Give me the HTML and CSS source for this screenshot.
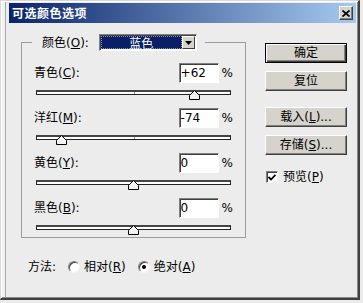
FILE: index.html
```html
<!DOCTYPE html>
<html>
<head>
  <title>可选颜色选项</title>
  <link rel="stylesheet" href="styles.css">
</head>
<body>

<div class="window">
  <div class="titlebar">
    <span class="title">可选颜色选项</span>
    <button class="close-btn" type="button">
      <svg width="8" height="7" viewBox="0 0 8 7"><path d="M0.5 0.5 L7.5 6.5 M7.5 0.5 L0.5 6.5" stroke="#000" stroke-width="1.7"/></svg>
    </button>
  </div>

  <div class="dialog">
    <div class="main">
      <fieldset class="group">
        <legend class="group-head">
          <span>颜色(<u>O</u>):</span>
          <div class="combo">
            <span class="combo-value">蓝色</span>
            <span class="combo-arrow">
              <svg width="7" height="4" viewBox="0 0 7 4"><polygon points="0,0 7,0 3.5,4" fill="#000"/></svg>
            </span>
          </div>
        </legend>

        <div class="adjust">
          <div class="field-row">
            <span class="row-label">青色(<u>C</u>):</span>
            <input class="value" type="text" value="+62">
            <span class="unit">%</span>
          </div>
          <div class="slider">
            <div class="track mid-tick"></div>
            <svg class="thumb" style="left: 153px" width="11" height="10" viewBox="0 0 11 10"><polygon points="5.5,0.5 10.5,5.5 10.5,9.5 0.5,9.5 0.5,5.5" fill="#f4f4f4" stroke="#000"/></svg>
          </div>
        </div>

        <div class="adjust">
          <div class="field-row">
            <span class="row-label">洋红(<u>M</u>):</span>
            <input class="value" type="text" value="-74">
            <span class="unit">%</span>
          </div>
          <div class="slider">
            <div class="track mid-tick"></div>
            <svg class="thumb" style="left: 20px" width="11" height="10" viewBox="0 0 11 10"><polygon points="5.5,0.5 10.5,5.5 10.5,9.5 0.5,9.5 0.5,5.5" fill="#f4f4f4" stroke="#000"/></svg>
          </div>
        </div>

        <div class="adjust">
          <div class="field-row">
            <span class="row-label">黄色(<u>Y</u>):</span>
            <input class="value" type="text" value="0">
            <span class="unit">%</span>
          </div>
          <div class="slider">
            <div class="track"></div>
            <svg class="thumb" style="left: 92px" width="11" height="10" viewBox="0 0 11 10"><polygon points="5.5,0.5 10.5,5.5 10.5,9.5 0.5,9.5 0.5,5.5" fill="#f4f4f4" stroke="#000"/></svg>
          </div>
        </div>

        <div class="adjust">
          <div class="field-row">
            <span class="row-label">黑色(<u>B</u>):</span>
            <input class="value" type="text" value="0">
            <span class="unit">%</span>
          </div>
          <div class="slider">
            <div class="track"></div>
            <svg class="thumb" style="left: 92px" width="11" height="10" viewBox="0 0 11 10"><polygon points="5.5,0.5 10.5,5.5 10.5,9.5 0.5,9.5 0.5,5.5" fill="#f4f4f4" stroke="#000"/></svg>
          </div>
        </div>
      </fieldset>

      <div class="method">
        <span class="method-label">方法:</span>
        <label class="radio-option"><span class="radio"></span>相对(<u>R</u>)</label>
        <label class="radio-option"><span class="radio checked"></span>绝对(<u>A</u>)</label>
      </div>
    </div>

    <div class="side">
      <button class="btn default" type="button">确定</button>
      <button class="btn" type="button">复位</button>
      <button class="btn gap-top" type="button">载入(<u>L</u>)...</button>
      <button class="btn" type="button">存储(<u>S</u>)...</button>
      <label class="preview">
        <span class="check">
          <svg width="8" height="7" viewBox="0 0 8 7"><polyline points="0.5,3 3,5.5 7.5,0.8" fill="none" stroke="#000" stroke-width="1.8"/></svg>
        </span>
        预览(<u>P</u>)
      </label>
    </div>
  </div>
</div>

</body>
</html>
```

FILE: styles.css
```css
body {
  margin: 0;
  background-color: #ebebeb;
  font-family: "DejaVu Sans", "Noto Sans CJK SC", sans-serif;
  font-size: 12px;
  line-height: 16px;
  color: #000;
}

.window {
  width: 360px;
  height: 300px;
  box-sizing: border-box;
  background-color: #ececec;
  border-style: solid;
  border-width: 1px 2px 2px 1px;
  border-color: #d8d8d8 #404040 #404040 #d8d8d8;
  box-shadow: inset 1px 1px 0 #fff, inset -1px -1px 0 #8a8a8a, inset 4px 0 0 #f2f2f2, inset 5px 0 0 #a8a8a8;
}

/* title bar */
.titlebar {
  display: flex;
  align-items: center;
  justify-content: space-between;
  height: 20px;
  margin: 2px 2px 0 8px;
  padding: 0 3px;
  background: linear-gradient(to right, #0a246a, #a6caf0);
}

.title {
  color: #fff;
  font-family: "Noto Sans CJK SC", sans-serif;
  font-weight: bold;
  letter-spacing: 0.5px;
}

.close-btn {
  display: flex;
  align-items: center;
  justify-content: center;
  width: 14px;
  height: 14px;
  padding: 0;
  background-color: #d6d3cc;
  border: 1px solid;
  border-color: #fff #404040 #404040 #fff;
  box-shadow: inset -1px -1px 0 #808080;
}

/* body */
.dialog {
  display: flex;
  align-items: flex-start;
  padding: 11px 0 0 20px;
}

.main {
  width: 225px;
}

.group {
  width: 225px;
  box-sizing: border-box;
  margin: 0;
  padding: 12px 12px 2px;
  border: 1px solid #9c9c9c;
}

.group-head {
  display: flex;
  align-items: center;
  margin-left: -2px;
  padding: 0 8px 0 10px;
}

.combo {
  display: flex;
  margin-left: 10px;
  padding: 1px;
  background-color: #fff;
  border: 1px solid;
  border-color: #808080 #fff #fff #808080;
  box-shadow: inset 1px 1px 0 #404040;
}

.combo-value {
  width: 81px;
  height: 13px;
  box-sizing: border-box;
  background-color: #0a1f66;
  outline: 1px dotted #8890b0;
  outline-offset: -1px;
  color: #fff;
  text-align: center;
  line-height: 13px;
  font-family: "Noto Sans CJK SC", sans-serif;
}

.combo-arrow {
  display: flex;
  align-items: center;
  justify-content: center;
  width: 13px;
  height: 13px;
  box-sizing: border-box;
  background-color: #d6d3cc;
  border: 1px solid;
  border-color: #fff #404040 #404040 #fff;
}

.adjust + .adjust {
  margin-top: 8px;
}

.field-row {
  display: flex;
  align-items: center;
  height: 20px;
}

.row-label {
  flex: 1;
}

.value {
  width: 40px;
  height: 20px;
  box-sizing: border-box;
  margin: 0;
  padding: 0 1px;
  background-color: #fff;
  border: 1px solid;
  border-color: #808080 #fff #fff #808080;
  box-shadow: inset 1px 1px 0 #404040;
  font: 12px "DejaVu Sans", sans-serif;
  color: #000;
}

.unit {
  margin-left: 3px;
}

.slider {
  position: relative;
  height: 10px;
  margin: 7px 2px 0;
}

.track {
  position: relative;
  height: 5px;
  margin-top: 3px;
  box-sizing: border-box;
  background-color: #fff;
  border: 1px solid #222;
  border-top: 2px solid #444;
}

.mid-tick::after {
  content: "";
  position: absolute;
  left: 97px;
  top: 0;
  width: 1px;
  height: 2px;
  background-color: #999;
}

.thumb {
  position: absolute;
  top: 0;
}

/* method row */
.method {
  display: flex;
  align-items: center;
  height: 16px;
  margin-top: 21px;
  padding-left: 7px;
}

.method-label {
  margin-right: 12px;
}

.radio-option {
  display: flex;
  align-items: center;
  margin-right: 12px;
}

.radio {
  position: relative;
  width: 12px;
  height: 12px;
  box-sizing: border-box;
  margin-right: 4px;
  border-radius: 50%;
  background-color: #fff;
  border: 1px solid;
  border-color: #808080 #f4f4f4 #f4f4f4 #808080;
  box-shadow: inset 1px 1px 0 #404040;
}

.radio.checked::after {
  content: "";
  position: absolute;
  left: 3px;
  top: 3px;
  width: 4px;
  height: 4px;
  border-radius: 50%;
  background-color: #000;
}

/* right column */
.side {
  display: flex;
  flex-direction: column;
  width: 82px;
  margin-left: 19px;
  padding-top: 9px;
}

.btn {
  width: 82px;
  height: 20px;
  box-sizing: border-box;
  margin: 0 0 8px;
  padding: 0;
  background-color: #d6d3cc;
  border: 1px solid;
  border-color: #fff #404040 #404040 #fff;
  box-shadow: inset -1px -1px 0 #808080;
  font: 12px/16px "DejaVu Sans", "Noto Sans CJK SC", sans-serif;
  color: #000;
}

.btn.default {
  border-color: #000;
  box-shadow: inset 1px 1px 0 #fff, inset -1px -1px 0 #404040, inset -2px -2px 0 #808080;
}

.btn.gap-top {
  margin-top: 8px;
}

.preview {
  display: flex;
  align-items: center;
  height: 14px;
  margin-top: 7px;
  padding-left: 1px;
}

.check {
  display: flex;
  align-items: center;
  justify-content: center;
  width: 12px;
  height: 12px;
  box-sizing: border-box;
  margin-right: 5px;
  background-color: #fff;
  border: 1px solid;
  border-color: #808080 #f4f4f4 #f4f4f4 #808080;
  box-shadow: inset 1px 1px 0 #404040;
}
```
